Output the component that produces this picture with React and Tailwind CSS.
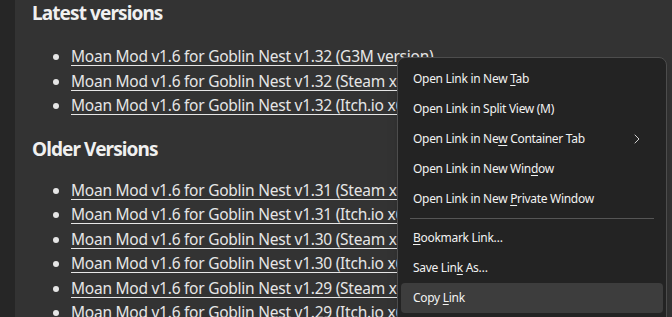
import { ChevronRight } from 'lucide-react';

const latest = [
  'Moan Mod v1.6 for Goblin Nest v1.32 (G3M version)',
  'Moan Mod v1.6 for Goblin Nest v1.32 (Steam x64)',
  'Moan Mod v1.6 for Goblin Nest v1.32 (Itch.io x64)',
];

const older = [
  'Moan Mod v1.6 for Goblin Nest v1.31 (Steam x64)',
  'Moan Mod v1.6 for Goblin Nest v1.31 (Itch.io x64)',
  'Moan Mod v1.6 for Goblin Nest v1.30 (Steam x64)',
  'Moan Mod v1.6 for Goblin Nest v1.30 (Itch.io x64)',
  'Moan Mod v1.6 for Goblin Nest v1.29 (Steam x64)',
  'Moan Mod v1.6 for Goblin Nest v1.29 (Itch.io x64)',
];

function LinkList({ items }) {
  return (
    <ul className="list-disc pl-[39px] text-[15.5px] tracking-[-0.25px] leading-[24.5px] text-[#e6e6e6]">
      {items.map((t, i) => (
        <li key={i} className="marker:text-[#e6e6e6]">
          <a href="#" className="underline underline-offset-[3px] decoration-1 whitespace-nowrap">{t}</a>
        </li>
      ))}
    </ul>
  );
}

// letter with an access-key underline
const U = ({ children }) => <span className="underline underline-offset-[2px]">{children}</span>;

function Item({ children, arrow, active }) {
  return (
    <div className={`mx-[3px] h-[30px] flex items-center justify-between pl-[12px] pr-[18px] rounded-[4px] ${active ? 'bg-[#3d3d3d]' : ''}`}>
      <span>{children}</span>
      {arrow && <ChevronRight className="w-[16px] h-[16px] text-[#cfcfcf]" strokeWidth={1.5} />}
    </div>
  );
}

export default function App() {
  return (
    <div className="relative w-[672px] h-[317px] overflow-hidden flex bg-[#333333] font-['Noto_Sans',sans-serif]">
      <div className="w-[15px] shrink-0 bg-[#262626]" />
      <div className="flex-1 pl-[17px]">
        <h2 className="text-[19px] tracking-[-0.9px] leading-[28px] font-bold text-[#f0f0f0] -mt-[1px]">Latest versions</h2>
        <div className="mt-[17px]">
          <LinkList items={latest} />
        </div>
        <h2 className="mt-[17px] text-[19px] tracking-[-0.9px] leading-[28px] font-bold text-[#f0f0f0]">Older Versions</h2>
        <div className="mt-[15px]">
          <LinkList items={older} />
        </div>
      </div>

      <div className="absolute left-[397px] top-[57px] w-[270px] h-[280px] rounded-[8px] border border-[#4d4d4d] bg-[#232323] shadow-lg pt-[6px] text-[12px] tracking-[-0.3px] text-[#f2f2f2]">
        <Item>Open Link in New <U>T</U>ab</Item>
        <Item>Open Link in Split View (M)</Item>
        <Item arrow>Open Link in Ne<U>w</U> Container Tab</Item>
        <Item>Open Link in New Win<U>d</U>ow</Item>
        <Item>Open Link in New <U>P</U>rivate Window</Item>
        <div className="mx-[12px] my-[4px] h-px bg-[#555555]" />
        <Item><U>B</U>ookmark Link…</Item>
        <Item>Save Lin<U>k</U> As…</Item>
        <Item active>Copy <U>L</U>ink</Item>
      </div>
    </div>
  );
}
